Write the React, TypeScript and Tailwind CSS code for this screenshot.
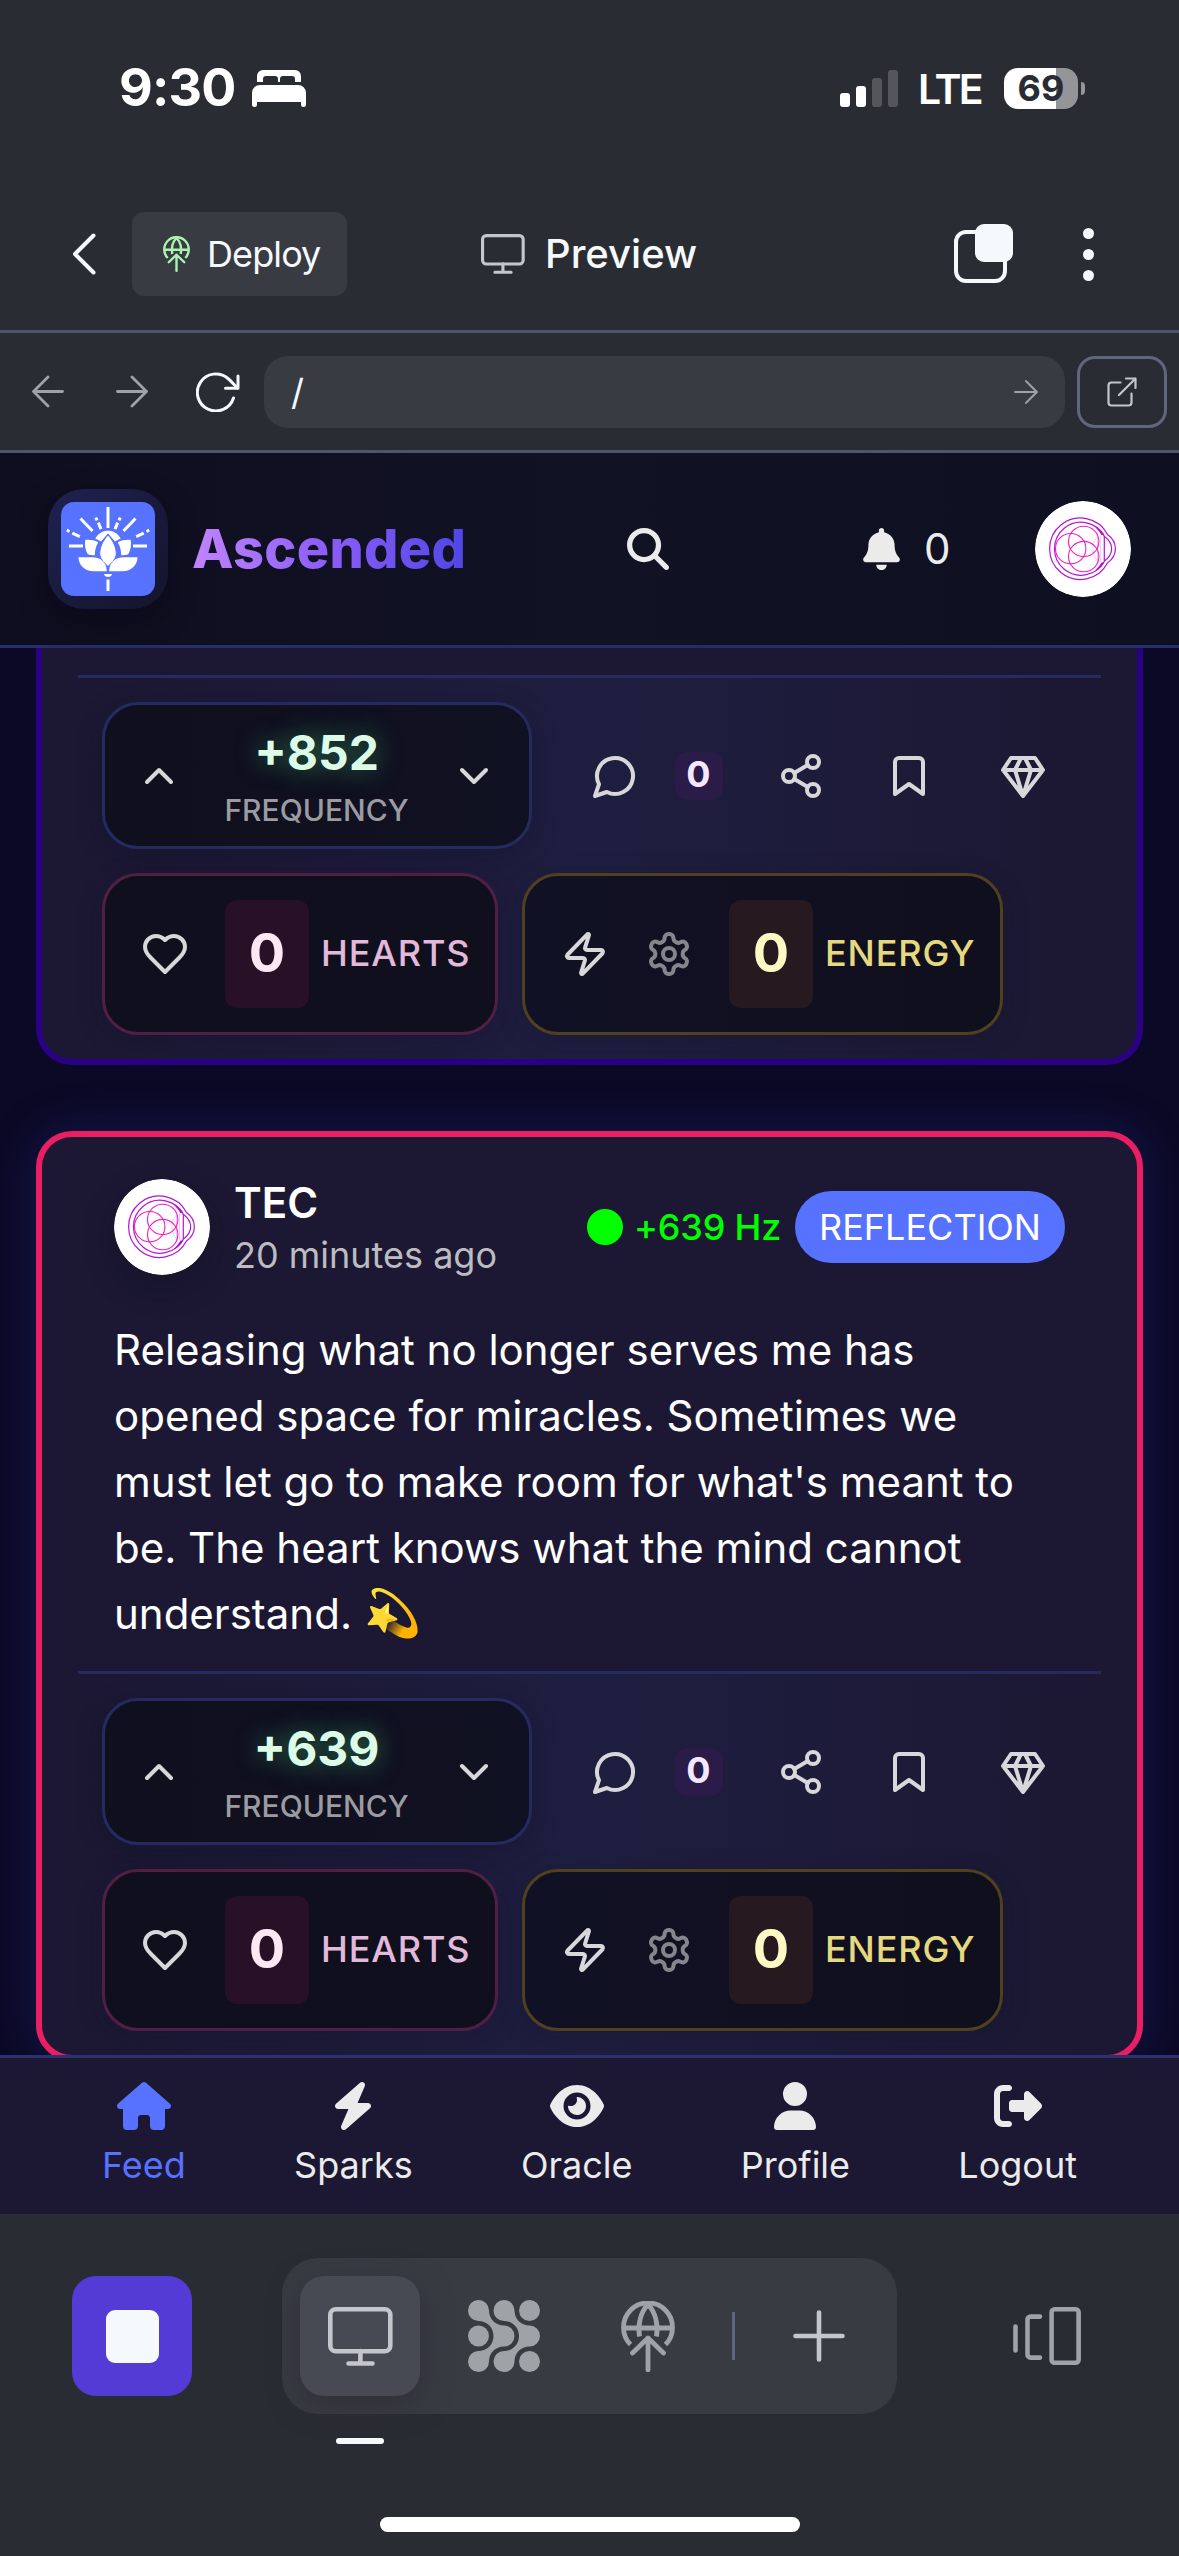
import React from "react";
import {
  FaBell,
  FaBolt,
  FaEye,
  FaHouse,
  FaMagnifyingGlass,
  FaRightFromBracket,
  FaUser,
} from "react-icons/fa6";

type SvgProps = { className?: string };

/* ---------- system and browser icons ---------- */

function BedIcon() {
  return (
    <svg className="h-[37px] w-[54px]" viewBox="0 0 54 37" fill="#fff">
      <path d="M5 12V6a6 6 0 0 1 6-6h32a6 6 0 0 1 6 6v6h-6V9a3 3 0 0 0-3-3H31a3 3 0 0 0-3 3v3h-2V9a3 3 0 0 0-3-3h-9a3 3 0 0 0-3 3v3Z" />
      <path d="M0 23a8 8 0 0 1 8-8h38a8 8 0 0 1 8 8v11.500a2.500 2.500 0 0 1-5 0V32H5v2.500a2.500 2.500 0 0 1-5 0Z" />
    </svg>
  );
}

function SignalIcon() {
  return (
    <svg className="h-[37px] w-[58px]" viewBox="0 0 58 37">
      <rect x="0" y="23" width="10" height="14" rx="3" fill="#fff" />
      <rect x="16" y="16" width="10" height="21" rx="3" fill="#fff" />
      <rect x="32" y="8" width="10" height="29" rx="3" fill="#55565c" />
      <rect x="48" y="0" width="10" height="37" rx="3" fill="#55565c" />
    </svg>
  );
}

function GlobeUp({ className }: SvgProps) {
  return (
    <svg className={className} viewBox="0 0 54 71" fill="none" stroke="currentColor" strokeWidth="4.800">
      <path d="M9.500 43.500A24.500 24.500 0 1 1 44.500 43.500" />
      <path d="M2.500 27h49M18.500 35.500C16.500 24 19.500 11 27 3.500c7.500 7.500 10.500 20.500 8.500 32" />
      <path d="M27 37v32M11.500 52 27 37l15.500 15" strokeLinecap="round" strokeLinejoin="round" />
    </svg>
  );
}

function MonitorIcon({ className }: SvgProps) {
  return (
    <svg className={className} viewBox="0 0 65 59" fill="none" stroke="currentColor" strokeWidth="4.600" strokeLinecap="round">
      <rect x="2.300" y="2.300" width="60" height="42" rx="5.500" />
      <path d="M32.400 44v12M20.500 56.500h24" />
    </svg>
  );
}

function SplitIcon() {
  return (
    <svg className="h-[60px] w-[60px]" viewBox="0 0 60 60">
      <rect x="2" y="8" width="49" height="49" rx="10" fill="none" stroke="#f5f9fc" strokeWidth="4" />
      <rect x="21" y="0" width="38" height="38" rx="9" fill="#f5f9fc" />
    </svg>
  );
}

function Arrow({ className }: SvgProps) {
  return (
    <svg className={className} viewBox="0 0 32 32" fill="none" stroke="currentColor" strokeWidth="2.800" strokeLinecap="round" strokeLinejoin="round">
      <path d="M1.500 16h29M16 1.500 30.500 16 16 30.500" />
    </svg>
  );
}

function ReloadIcon() {
  return (
    <svg className="h-[40px] w-[44px]" viewBox="0 0 44 40" fill="none" stroke="#f5f9fc" strokeWidth="3" strokeLinecap="round" strokeLinejoin="round">
      <path d="M37.500 26A18.500 18.500 0 1 1 32 6.500c3.500 3 6.500 6.500 9.500 9.500" />
      <path d="M42 4v12.300H29.500" />
    </svg>
  );
}

function OpenIcon() {
  return (
    <svg className="h-[30px] w-[30px]" viewBox="0 0 30 30" fill="none" stroke="#c3c6ca" strokeWidth="2.200" strokeLinecap="round" strokeLinejoin="round">
      <path d="M13.500 5.500H4.500a3 3 0 0 0-3 3v17a3 3 0 0 0 3 3h17a3 3 0 0 0 3-3v-9" />
      <path d="M19 1.500h9.500V11M28.500 1.500 12 18" />
    </svg>
  );
}

function CellsIcon() {
  return (
    <svg className="h-[72px] w-[72px]" viewBox="0 0 72 72" fill="#9fa2a6">
      <path d="M21 10.500C21 19 27.500 25.500 36 25.500A10.500 10.500 0 0 1 36 46.500C27.500 46.500 21 53 21 61.500A10.500 10.500 0 1 1 10.500 51C19 51 25.500 44.500 25.500 36C25.500 27.500 19 21 10.500 21A10.500 10.500 0 1 1 21 10.500Z" />
      <path d="M46.500 10.500C46.500 19 53 25.500 61.500 25.500A10.500 10.500 0 0 1 61.500 46.500C53 46.500 46.500 53 46.500 61.500A10.500 10.500 0 1 1 36 51C44.500 51 51 44.500 51 36C51 27.500 44.500 21 36 21A10.500 10.500 0 1 1 46.500 10.500Z" />
      <circle cx="61.500" cy="10.500" r="10.500" />
      <circle cx="10.500" cy="36" r="10.500" />
      <circle cx="61.500" cy="61.500" r="10.500" />
    </svg>
  );
}

function DevicesIcon() {
  return (
    <svg className="h-[58px] w-[68px]" viewBox="0 0 68 58" fill="none" stroke="#9fa2a6" strokeWidth="4.600" strokeLinecap="round">
      <path d="M2.500 19.500v24M27 9.600H17.500a3 3 0 0 0-3 3v35a3 3 0 0 0 3 3H27" />
      <rect x="38.600" y="2.300" width="27" height="53.400" rx="3" />
    </svg>
  );
}

/* ---------- brand drawings ---------- */

function LotusLogo() {
  return (
    <svg className="h-[94px] w-[94px] rounded-[13px]" viewBox="0 0 94 94">
      <rect width="94" height="94" fill="#5672ff" />
      <g stroke="#fff" strokeWidth="3" fill="none">
        <path d="M47 5v21M47 77.500v11.500M8 44h14M72 44h14" />
        <path d="M19.500 16.500 31.500 29M74.500 16.500 62.500 29M37.300 20.700l2.700 6.500M56.700 20.700 54 27.200M11.300 31.200l7.500 3.500M82.700 31.200l-7.500 3.500" />
        <path d="M34.800 15.500l1.200 2.800M59.200 15.500 58 18.300M5.800 28.200l2.800 1.300M88.200 28.200l-2.800 1.300" />
      </g>
      <g fill="#fff">
        <path d="M34.300 36.500C39.500 26 54.500 26 59.700 36.500L54 39.500 47 31.500 40 39.500Z" />
        <path
          d="M47 33c6 6.500 8.500 13.500 8.300 20C54 58 50 61.500 47 64.500 44 61.500 40 58 38.700 53 38.500 46.500 41 39.500 47 33Z"
          stroke="#5672ff"
          strokeWidth="1"
        />
        <path d="M24.300 37.800c4.500-.300 9 .200 13 2.500-2.500 4-3.500 8.500-3.500 13-2.500 0-5-.200-7-1C24 48 23.600 42.500 24.300 37.800Z" />
        <path d="M69.700 37.800c-4.500-.300-9 .200-13 2.500 2.500 4 3.500 8.500 3.500 13 2.500 0 5-.200 7-1 2.800-4.300 3.200-9.800 2.500-14.500Z" />
        <path d="M17.500 55.300h13.500c8 0 14.500 4 14.800 14H34C24 70 17.500 63 17.500 55.300Z" />
        <path d="M76.500 55.300H63c-8 0-14.500 4-14.800 14H60C70 70 76.500 63 76.500 55.300Z" />
        <path d="M43 72h8c-.500 4-7.500 4-8 0Z" />
      </g>
    </svg>
  );
}

function Avatar({ className = "" }: SvgProps) {
  return (
    <svg className={`h-24 w-24 shrink-0 rounded-full ${className}`} viewBox="0 0 96 96" fill="none">
      <circle cx="48" cy="48" r="48" fill="#fff" />
      <g stroke="#b314d2" strokeWidth="1.200">
        <path d="M72.500 33.500A30.700 30.700 0 1 0 72.500 62C83 54.500 83 41 72.500 33.500Z" />
        <path d="M69.500 35.500A26.500 26.500 0 1 0 69.500 60C79 53 79 42.500 69.500 35.500Z" />
        <path d="M69.300 35v25" />
      </g>
      <g fill="#b314d2">
        <path d="M59 24.500C63.500 26.500 67 29.800 69.500 34H66.500C64 30 61.500 27.500 59 24.500Z" />
        <path d="M59 71C63.500 69 67 65.700 69.500 61.500H66.500C64 65.500 61.500 68 59 71Z" />
      </g>
      <g stroke="#ecc4f2" strokeWidth=".900">
        <path d="M62.500 34v27M65.500 34v27M62 36c-5.500 7-5.500 16.500 0 23.500" />
      </g>
      <g stroke="#f31fc2" strokeWidth="1.100">
        <circle cx="35.700" cy="47.700" r="15.200" />
        <circle cx="48.700" cy="40.400" r="15.200" />
        <circle cx="48.700" cy="55.600" r="15.200" />
      </g>
    </svg>
  );
}

/* ---------- post action icons, 24-unit outline set ---------- */

function Outline({ children, className = "text-[#d8d8da]" }: { children: React.ReactNode; className?: string }) {
  return (
    <svg className={`h-12 w-12 shrink-0 ${className}`} viewBox="0 0 24 24" fill="none" stroke="currentColor" strokeWidth="2" strokeLinecap="round" strokeLinejoin="round">
      {children}
    </svg>
  );
}

function ActionRows({ frequency }: { frequency: string }) {
  return (
    <div className="mx-9 border-t-[3px] border-[#262a60] bg-linear-to-r from-[#1c1833] via-[#1e1e40] to-[#1c1833] p-6">
      <div className="flex h-[147px] items-center">
        <div className="flex h-full w-[430px] items-center justify-between rounded-[36px] border-[3px] border-[#252b60] bg-linear-to-r from-[#100f1d] to-[#101122] pr-[31px] pl-[30px] shadow-[0_6px_24px_rgba(15,15,35,0.35)]">
          <Outline><path d="m18 15-6-6-6 6" /></Outline>
          <div className="flex flex-col items-center pb-[3px]">
            <span className="text-[48px] leading-[72px] font-bold text-[#dcfce7] [text-shadow:0_0_24px_rgba(74,222,128,0.5)]">{frequency}</span>
            <span className="text-[30px] leading-[42px] font-medium text-[#9b9ba1]">FREQUENCY</span>
          </div>
          <Outline><path d="m6 9 6 6 6-6" /></Outline>
        </div>
        <div className="ml-[59px] flex items-center">
          <Outline><path d="M7.900 20A9 9 0 1 0 4 16.100L2 22Z" /></Outline>
          <span className="ml-9 flex h-12 w-12 items-center justify-center rounded-[12px] bg-[#2a1b48] pr-px pb-[3px] text-[36px] leading-none font-bold text-[#f3e8ff]">0</span>
          <div className="ml-[54px] flex gap-[60px]">
            <Outline>
              <circle cx="18" cy="5" r="3" /><circle cx="6" cy="12" r="3" /><circle cx="18" cy="19" r="3" />
              <path d="m8.600 13.500 6.800 4M15.400 6.500l-6.800 4" />
            </Outline>
            <Outline><path d="m19 21-7-5-7 5V5a2 2 0 0 1 2-2h10a2 2 0 0 1 2 2Z" /></Outline>
          </div>
          <div className="ml-[66px]">
            <Outline><path d="M6 3h12l4 6-10 13L2 9ZM11 3 8 9l4 13 4-13-3-6M2 9h20" /></Outline>
          </div>
        </div>
      </div>
      <div className="mt-6 flex h-[162px] gap-6">
        <div className="flex h-full w-[396px] items-center rounded-[36px] border-[3px] border-[#521f44] bg-[#0f0f1e] pl-9 shadow-[0_6px_24px_rgba(15,15,35,0.25)]">
          <Outline><path d="M19 14c1.490-1.460 3-3.210 3-5.500A5.500 5.500 0 0 0 16.500 3c-1.760 0-3 .500-4.500 2-1.500-1.500-2.740-2-4.500-2A5.500 5.500 0 0 0 2 8.500c0 2.300 1.500 4.050 3 5.500l7 7Z" /></Outline>
          <span className="ml-9 flex h-[108px] w-[84px] items-center justify-center rounded-[12px] bg-[#281126] pb-[3px] text-[54px] leading-none font-bold text-[#fce7f3]">0</span>
          <span className="ml-3 pb-[2px] text-[36px] leading-none font-medium tracking-wide whitespace-nowrap text-[#e3b9d9]">HEARTS</span>
        </div>
        <div className="flex h-full w-[481px] items-center rounded-[36px] border-[3px] border-[#50401d] bg-linear-to-r from-[#111125] to-[#100f1d] pl-9 shadow-[0_6px_24px_rgba(15,15,35,0.25)]">
          <Outline><path d="M4 14a1 1 0 0 1-.780-1.630l9.900-10.200a.5.5 0 0 1 .860.460l-1.920 6.020A1 1 0 0 0 13 10h7a1 1 0 0 1 .780 1.630l-9.900 10.200a.5.5 0 0 1-.860-.460l1.920-6.020A1 1 0 0 0 11 14Z" /></Outline>
          <div className="ml-9">
            <Outline className="text-[#85858d]">
              <path d="M12.220 2h-.440a2 2 0 0 0-2 2v.180a2 2 0 0 1-1 1.730l-.430.250a2 2 0 0 1-2 0l-.150-.080a2 2 0 0 0-2.730.730l-.220.380a2 2 0 0 0 .730 2.730l.150.100a2 2 0 0 1 1 1.720v.510a2 2 0 0 1-1 1.740l-.150.090a2 2 0 0 0-.730 2.730l.220.380a2 2 0 0 0 2.730.730l.150-.080a2 2 0 0 1 2 0l.430.250a2 2 0 0 1 1 1.730V20a2 2 0 0 0 2 2h.440a2 2 0 0 0 2-2v-.180a2 2 0 0 1 1-1.730l.430-.250a2 2 0 0 1 2 0l.150.080a2 2 0 0 0 2.730-.730l.220-.390a2 2 0 0 0-.730-2.730l-.150-.080a2 2 0 0 1-1-1.740v-.500a2 2 0 0 1 1-1.740l.150-.090a2 2 0 0 0 .730-2.730l-.220-.380a2 2 0 0 0-2.730-.730l-.150.080a2 2 0 0 1-2 0l-.430-.250a2 2 0 0 1-1-1.730V4a2 2 0 0 0-2-2Z" />
              <circle cx="12" cy="12" r="3" />
            </Outline>
          </div>
          <span className="ml-9 flex h-[108px] w-[84px] items-center justify-center rounded-[12px] bg-[#261a20] pb-[3px] text-[54px] leading-none font-bold text-[#fef9c3]">0</span>
          <span className="ml-3 pb-[2px] text-[36px] leading-none font-medium tracking-wide whitespace-nowrap text-[#e5d97f]">ENERGY</span>
        </div>
      </div>
    </div>
  );
}

/* ---------- page sections ---------- */

function StatusBar() {
  return (
    <div className="flex h-[176px] items-center pl-[119px]">
      <span className="w-[133px] text-[52px] leading-none font-bold tracking-[-0.8px] text-white">9:30</span>
      <BedIcon />
      <div className="ml-[534px] flex items-center">
        <SignalIcon />
        <span className="ml-[20px] w-[86px] pt-[2px] text-[41px] leading-none font-semibold tracking-[-2.8px] text-white">LTE</span>
        <div className="flex h-[41px] w-[74px] items-center justify-center rounded-[14px] bg-linear-to-r from-white from-70% to-[#949599] to-70%">
          <span className="text-[36px] leading-none font-bold text-[#2a2c33]">69</span>
        </div>
        <div className="ml-[3px] h-[13px] w-[4px] rounded-r-full bg-[#949599]" />
      </div>
    </div>
  );
}

function Toolbar() {
  return (
    <div className="flex h-[154px] items-center pt-[2px] text-[#f5f9fc]">
      <svg className="ml-[72px] h-[42px] w-[24px]" viewBox="0 0 24 42" fill="none" stroke="currentColor" strokeWidth="4" strokeLinecap="round" strokeLinejoin="round">
        <path d="M21.500 2.500 3 21l18.500 18.500" />
      </svg>
      <div className="ml-9 flex h-[84px] w-[215px] items-center rounded-[12px] bg-[#393b43] pl-[31px]">
        <GlobeUp className="h-9 w-[27px] text-[#acf3b0]" />
        <span className="ml-[17px] text-[36px] leading-none tracking-[-0.9px]">Deploy</span>
      </div>
      <MonitorIcon className="ml-[134px] h-10 w-11 text-[#c3c6ca]" />
      <span className="ml-[20px] w-[409px] text-[40px] leading-none font-medium">Preview</span>
      <SplitIcon />
      <div className="ml-[69px] flex flex-col gap-[10px]">
        <i className="size-[11px] rounded-full bg-[#f5f9fc]" />
        <i className="size-[11px] rounded-full bg-[#f5f9fc]" />
        <i className="size-[11px] rounded-full bg-[#f5f9fc]" />
      </div>
    </div>
  );
}

function AddressBar() {
  return (
    <div className="flex h-[123px] items-center border-y-[3px] border-[#4e556a] text-[#9fa2a6]">
      <Arrow className="ml-8 h-[35px] w-[32px] rotate-180" />
      <Arrow className="ml-[52px] h-[35px] w-[32px]" />
      <span className="ml-[48px]"><ReloadIcon /></span>
      <div className="ml-[24px] flex h-[72px] w-[801px] items-center justify-between rounded-[24px] bg-[#393b43] pr-[27px] pl-[27px]">
        <span className="text-[36px] leading-none text-[#f5f9fc]">/</span>
        <Arrow className="h-[24px] w-[24px]" />
      </div>
      <div className="ml-3 flex h-[72px] w-[90px] items-center justify-center rounded-[18px] border-[3px] border-[#5f677e]">
        <OpenIcon />
      </div>
    </div>
  );
}

function AppHeader() {
  return (
    <header className="flex h-[195px] items-center border-b-[3px] border-[#272d69] bg-linear-to-r from-[#0e0e20] via-[#121225] via-50% to-[#0f0f22] text-[#ebebeb]">
      <div className="ml-12 flex size-[120px] items-center justify-center rounded-[36px] bg-linear-to-br from-[#1e2250] to-[#14142c] shadow-[0_10px_30px_rgba(5,5,15,0.45)]">
        <LotusLogo />
      </div>
      <div className="ml-6 flex w-[435px]">
        <span className="bg-linear-to-r from-[#c084fc] via-[#8b5cf6] to-[#4f46e5] bg-clip-text text-[54px] leading-[72px] font-extrabold tracking-[0.3px] text-transparent">Ascended</span>
      </div>
      <FaMagnifyingGlass className="size-[42px]" />
      <FaBell className="ml-[194px] h-[42px] w-[37px]" />
      <span className="ml-[24px] w-[111px] text-[42px] leading-none">0</span>
      <Avatar />
    </header>
  );
}

function Feed() {
  return (
    <main className="h-[1407px] overflow-hidden bg-[#0c0926] px-9">
      <article className="rounded-b-[36px] border-[6px] border-t-0 border-[#2a0085] bg-[#1c1833] pt-[27px]">
        <ActionRows frequency="+852" />
      </article>
      <article className="mt-[66px] rounded-[36px] border-[6px] border-[#e91e63] bg-[#1c1833] shadow-[0_0_48px_rgba(40,60,170,0.3)]">
        <div className="flex h-[180px] items-center px-[72px] pt-[42px] pb-[42px]">
          <Avatar className="shadow-[0_12px_30px_rgba(15,15,30,0.35)]" />
          <div className="ml-6 w-[353px] pt-[3px]">
            <div className="text-[42px] leading-[54px] font-semibold text-white">TEC</div>
            <div className="text-[36px] leading-[51px] whitespace-nowrap text-[#bdbcc0]">20 minutes ago</div>
          </div>
          <i className="size-9 shrink-0 rounded-full bg-[#00ff00]" />
          <span className="ml-[11px] w-[161px] text-[36px] leading-none font-medium tracking-[-0.2px] whitespace-nowrap text-[#00ff00]">+639 Hz</span>
          <span className="flex h-[72px] w-[270px] shrink-0 items-center justify-center rounded-full bg-[#5672ff] text-[36px] leading-none text-white">REFLECTION</span>
        </div>
        <p className="px-[72px] pb-6 text-[42px] leading-[66px] whitespace-nowrap text-white">
          Releasing what no longer serves me has<br />
          opened space for miracles. Sometimes we<br />
          must let go to make room for what's meant to<br />
          be. The heart knows what the mind cannot<br />
          understand. <span className="text-[46px] leading-none">💫</span>
        </p>
        <ActionRows frequency="+639" />
      </article>
    </main>
  );
}

function BottomNav() {
  const tab = "flex flex-col items-center";
  const label = "mt-[14px] text-[36px] leading-[42px]";
  return (
    <nav className="flex h-[159px] justify-between border-t-[3px] border-[#2c3270] bg-[#1c1833] px-[102px] pt-6 text-[#ebebeb]">
      <div className="flex flex-col items-center text-[#5672ff]"><FaHouse className="h-12 w-[54px]" /><span className={label}>Feed</span></div>
      <div className={tab}><FaBolt className="h-12 w-[42px]" /><span className={label}>Sparks</span></div>
      <div className={tab}><FaEye className="h-12 w-[54px]" /><span className={label}>Oracle</span></div>
      <div className={tab}><FaUser className="h-12 w-[42px]" /><span className={label}>Profile</span></div>
      <div className={tab}><FaRightFromBracket className="size-12" /><span className={label}>Logout</span></div>
    </nav>
  );
}

function Dock() {
  return (
    <footer className="flex flex-1 flex-col pt-[44px]">
      <div className="flex h-[156px] items-center pl-[72px]">
        <div className="flex size-[120px] items-center justify-center rounded-[24px] bg-[#553bd6]">
          <div className="size-[53px] rounded-[9px] bg-[#f5f9fc]" />
        </div>
        <div className="ml-[90px] flex h-[156px] w-[615px] items-center rounded-[36px] bg-[#393b43] pl-[18px]">
          <div className="flex size-[120px] items-center justify-center rounded-[24px] bg-[#484a53] shadow-[0_8px_30px_rgba(40,42,45,0.6)]">
            <MonitorIcon className="h-[59px] w-[65px] text-[#c3c6ca]" />
          </div>
          <span className="ml-12"><CellsIcon /></span>
          <GlobeUp className="ml-[81px] h-[71px] w-[54px] text-[#9fa2a6]" />
          <i className="ml-[57px] h-12 w-[3px] bg-[#5f677e]" />
          <svg className="ml-[58px] size-[52px]" viewBox="0 0 52 52" stroke="#c3c6ca" strokeWidth="4.600" strokeLinecap="round">
            <path d="M2.500 26h47M26 2.500v47" />
          </svg>
        </div>
        <span className="ml-[116px]"><DevicesIcon /></span>
      </div>
      <i className="mt-6 ml-[336px] h-[6px] w-12 rounded-full bg-[#f5f9fc]" />
      <i className="mt-[73px] h-[15px] w-[420px] self-center rounded-full bg-white" />
    </footer>
  );
}

export default function App() {
  return (
    <div className="flex h-[2556px] w-[1179px] flex-col overflow-hidden bg-[#2a2c33] font-['Inter',sans-serif]">
      <StatusBar />
      <Toolbar />
      <AddressBar />
      <AppHeader />
      <Feed />
      <BottomNav />
      <Dock />
    </div>
  );
}
